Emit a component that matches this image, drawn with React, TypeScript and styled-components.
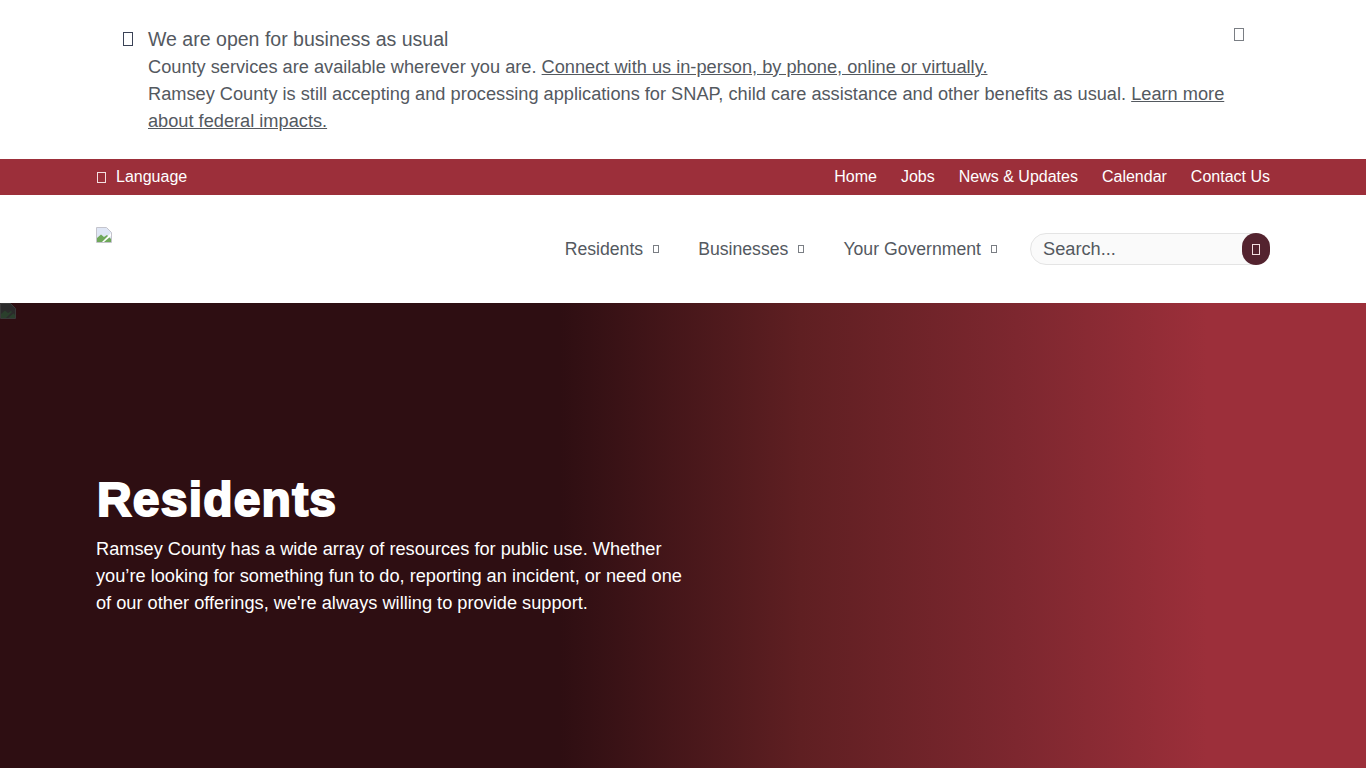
import React from "react";
import styled, { createGlobalStyle } from "styled-components";

const Global = createGlobalStyle`
  html, body { margin: 0; padding: 0; background: #fff; }
  body { font-family: "Liberation Sans", Arial, sans-serif; overflow: hidden; }
  * { box-sizing: border-box; }
`;

const Tofu = styled.span<{ $w: number; $h: number; $color: string }>`
  display: inline-block;
  flex: none;
  width: ${(p) => p.$w}px;
  height: ${(p) => p.$h}px;
  border: 1px solid ${(p) => p.$color};
`;

const Alert = styled.section`
  height: 159px;
  padding: 25px 122px 0 122px;
  display: flex;
  color: #54595f;
`;
const AlertIcon = styled.div`
  width: 26px;
  flex: none;
  padding-top: 7px;
  padding-left: 1px;
  display: flex;
`;
const AlertBody = styled.div`
  width: 1086px;
  font-size: 18.22px;
  line-height: 27px;
`;
const AlertTitle = styled.div`
  font-size: 19.55px;
  line-height: 29px;
`;
const AlertLink = styled.a`
  color: #54595f;
  text-decoration: underline;
`;
const CloseBox = styled.div`
  flex: none;
  padding-top: 3px;
  display: flex;
`;

const TopBar = styled.div`
  height: 36px;
  background: #9c2f3a;
  padding: 0 96px;
  display: flex;
  align-items: center;
  justify-content: space-between;
  color: #fff;
  font-size: 16px;
`;
const Lang = styled.div`
  display: flex;
  align-items: center;
  gap: 10px;
  padding-left: 1px;
`;
const TopLinks = styled.nav`
  display: flex;
  gap: 24px;
`;
const TopLink = styled.a`
  color: #fff;
`;

const Header = styled.header`
  height: 108px;
  padding: 0 96px;
  display: flex;
  justify-content: space-between;
  align-items: flex-start;
`;
const Logo = styled.svg`
  margin-top: 32px;
  display: block;
`;
const HeaderRight = styled.div`
  display: flex;
  align-items: center;
  height: 32px;
  margin-top: 38px;
`;
const MainNav = styled.nav`
  display: flex;
  gap: 39px;
  margin-right: 33px;
`;
const NavItem = styled.a`
  display: flex;
  align-items: center;
  gap: 10px;
  font-size: 17.65px;
  color: #54595f;
`;
const Search = styled.div`
  position: relative;
  width: 240px;
  height: 32px;
  border: 1px solid #e4e4e4;
  border-radius: 16px;
  background: #fafafa;
  padding-left: 12px;
  font-size: 18.22px;
  line-height: 30px;
  color: #54595f;
`;
const SearchBtn = styled.div`
  position: absolute;
  right: -1px;
  top: -1px;
  width: 28px;
  height: 32px;
  border-radius: 14px;
  background: #54232f;
  display: flex;
  align-items: center;
  justify-content: center;
`;

const Hero = styled.section`
  position: relative;
  height: 465px;
  padding: 169px 96px 0;
  color: #fff;
  background: linear-gradient(90deg, #2e0e12 0%, #2e0e12 41%, #5f1f22 58.6%, #7d272f 74.4%, #9c2f3a 88.4%, #9c2f3a 100%);
`;
const HeroBroken = styled.svg`
  position: absolute;
  left: 0;
  top: 0;
`;
const HeroTitle = styled.h1`
  margin: 0 0 8px;
  padding-left: 1px;
  font-family: "Liberation Sans", Arial, sans-serif;
  font-size: 48px;
  line-height: 56px;
  font-weight: 700;
  letter-spacing: 1.2px;
  -webkit-text-stroke: 2px #fff;
`;
const HeroText = styled.p`
  margin: 0;
  width: 590px;
  font-size: 18.22px;
  line-height: 27px;
`;

const Broken = ({ dim }: { dim?: boolean }) => (
  <>
    <path d="M0.5 0.5H10.5L15.5 5.5V15.5H0.5Z" fill={dim ? "#2b2b2b" : "#dfe6f5"} stroke={dim ? "#3a3a3a" : "#c4c4cc"} />
    <path d="M1 15V11L5 7.5L8 10L11 8L15 12V15Z" fill={dim ? "#2a3f2c" : "#6fa85a"} />
    <path d="M8 15L15 9V6L6 15Z" fill={dim ? "#2b2b2b" : "#fff"} />
  </>
);

export default function App() {
  return (
    <>
      <Global />
      <Alert>
        <AlertIcon>
          <Tofu $w={10} $h={14} $color="#3a4256" />
        </AlertIcon>
        <AlertBody>
          <AlertTitle>We are open for business as usual</AlertTitle>
          <div>
            County services are available wherever you are.{" "}
            <AlertLink>Connect with us in-person, by phone, online or virtually.</AlertLink>
          </div>
          <div>
            Ramsey County is still accepting and processing applications for SNAP, child care assistance and other benefits as usual.{" "}
            <AlertLink>Learn more about federal impacts.</AlertLink>
          </div>
        </AlertBody>
        <CloseBox>
          <Tofu $w={10} $h={13} $color="#7a7e84" />
        </CloseBox>
      </Alert>
      <TopBar>
        <Lang>
          <Tofu $w={9} $h={11} $color="#f3dfe1" />
          Language
        </Lang>
        <TopLinks>
          {["Home", "Jobs", "News & Updates", "Calendar", "Contact Us"].map((t) => (
            <TopLink key={t}>{t}</TopLink>
          ))}
        </TopLinks>
      </TopBar>
      <Header>
        <Logo width="16" height="16" viewBox="0 0 16 16">
          <Broken />
        </Logo>
        <HeaderRight>
          <MainNav>
            {["Residents", "Businesses", "Your Government"].map((t) => (
              <NavItem key={t}>
                {t}
                <Tofu $w={6} $h={8} $color="#7a7e84" />
              </NavItem>
            ))}
          </MainNav>
          <Search>
            Search...
            <SearchBtn>
              <Tofu $w={8} $h={11} $color="#f3dfe1" />
            </SearchBtn>
          </Search>
        </HeaderRight>
      </Header>
      <Hero>
        <HeroBroken width="16" height="16" viewBox="0 0 16 16">
          <Broken dim />
        </HeroBroken>
        <HeroTitle>Residents</HeroTitle>
        <HeroText>
          Ramsey County has a wide array of resources for public use. Whether you’re looking for something fun to do, reporting an incident, or need one of our other offerings, we're always willing to provide support.
        </HeroText>
      </Hero>
    </>
  );
}
